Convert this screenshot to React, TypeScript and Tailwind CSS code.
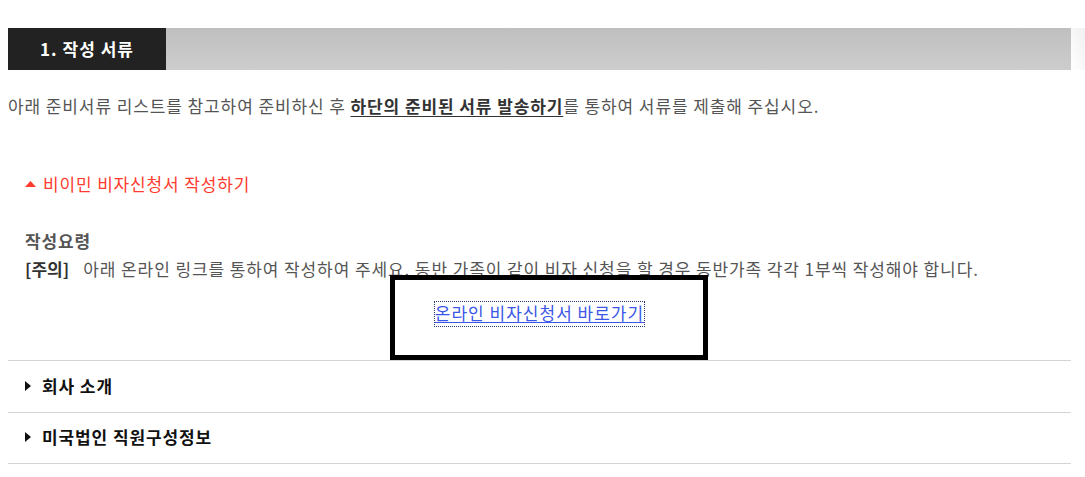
import React from "react";

const font = { fontFamily: '"Noto Sans CJK KR", "Noto Sans", sans-serif' };

function RightTri() {
  return (
    <svg width="6" height="10" viewBox="0 0 6 10" className="shrink-0">
      <polygon points="0,0 6,5 0,10" fill="#111" />
    </svg>
  );
}

export default function App() {
  return (
    <div
      className="relative w-[1085px] h-[477px] bg-white overflow-hidden"
      style={font}
    >
      <div className="pt-[28px] pl-2 flex">
        <div className="flex h-[42px] w-[1063px]">
          <div className="w-[158px] bg-[#222222] flex items-center justify-center text-white font-bold text-[17px] tracking-[1px]">
            1. 작성 서류
          </div>
          <div className="flex-1 bg-gradient-to-b from-[#bfbfbf] to-[#cdcdcd]" />
        </div>
        <div className="w-[14px] h-[42px] bg-gradient-to-bl from-[#f0f0f0] to-white" />
      </div>

      <p className="mt-[24px] ml-2 text-[17px] leading-[24px] text-[#555] tracking-[0.9px]">
        아래 준비서류 리스트를 참고하여 준비하신 후{" "}
        <b className="text-[#333] underline underline-offset-[3px]">
          하단의 준비된 서류 발송하기
        </b>
        를 통하여 서류를 제출해 주십시오.
      </p>

      <div className="mt-[54px] ml-[25px] flex items-center gap-[7px] text-[#ff3a2e] text-[17px] leading-[24px] tracking-[0.85px]">
        <svg width="11" height="6" viewBox="0 0 11 6">
          <polygon points="0,6 5.5,0 11,6" fill="#ff3a2e" />
        </svg>
        비이민 비자신청서 작성하기
      </div>

      <div className="mt-[33px] ml-[25px] text-[17px] leading-[24px] text-[#555] tracking-[0.9px]">
        <div className="font-bold">작성요령</div>
        <div className="mt-[4px]">
          <b className="text-[#333] tracking-[0px]">[주의]</b>&nbsp;&nbsp; 아래 온라인 링크를 통하여
          작성하여 주세요. 동반 가족이 같이 비자 신청을 할 경우 동반가족 각각
          1부씩 작성해야 합니다.
        </div>
      </div>

      <div className="mt-[21px] flex justify-center w-[1079px] h-[24px]">
        <a
          href="#"
          className="text-[#3a57e8] text-[17px] leading-[21px] underline underline-offset-[2px] outline outline-1 outline-dotted outline-[#2a3a80] tracking-[1px]"
        >
          온라인 비자신청서 바로가기
        </a>
      </div>

      <div className="mt-[34px] ml-2 w-[1063px] border-t border-[#d4d4d4]">
        <div className="h-[51px] flex items-center gap-[11px] pl-[17px] pb-[2px] font-bold text-[17px] tracking-[0.9px] text-[#111]">
          <RightTri />
          회사 소개
        </div>
        <div className="border-t border-[#d4d4d4] h-[51px] flex items-center gap-[11px] pl-[17px] pb-[2px] font-bold text-[17px] tracking-[0.9px] text-[#111]">
          <RightTri />
          미국법인 직원구성정보
        </div>
        <div className="border-t border-[#d4d4d4]" />
      </div>

      <div className="absolute left-[390px] top-[275px] w-[318px] h-[85px] border-[5px] border-black" />
    </div>
  );
}
